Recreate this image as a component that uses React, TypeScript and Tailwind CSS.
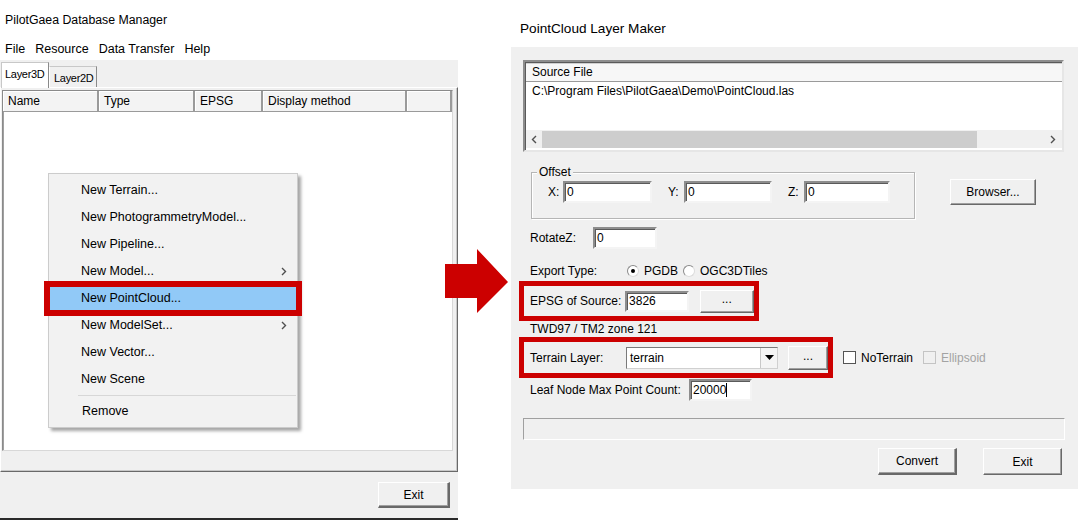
import React from 'react';

const inputCls =
  'bg-white border-2 border-t-[#8d8d8d] border-l-[#8d8d8d] border-r-[#f4f4f4] border-b-[#f4f4f4] shadow-[inset_1px_1px_0_#5a5a5a] flex items-center pl-[2px]';
const btnCls =
  'bg-[#f0f0f0] border border-t-white border-l-white border-r-[#696969] border-b-[#696969] shadow-[inset_-1px_-1px_0_#a0a0a0] flex items-center justify-center';

const Chevron: React.FC<{ dir: 'left' | 'right' }> = ({ dir }) => (
  <svg width="6" height="9" viewBox="0 0 6 9">
    <path d={dir === 'right' ? 'M1 1 L4.5 4.5 L1 8' : 'M5 1 L1.5 4.5 L5 8'} fill="none" stroke="#505050" strokeWidth="1.4" />
  </svg>
);

const menuItems = [
  { label: 'New Terrain...' },
  { label: 'New PhotogrammetryModel...' },
  { label: 'New Pipeline...' },
  { label: 'New Model...', sub: true },
  { label: 'New PointCloud...', active: true },
  { label: 'New ModelSet...', sub: true },
  { label: 'New Vector...' },
  { label: 'New Scene' },
];

const columns = [
  { name: 'Name', w: 'w-[96px]' },
  { name: 'Type', w: 'w-[96px]' },
  { name: 'EPSG', w: 'w-[68px]' },
  { name: 'Display method', w: 'w-[144px]' },
  { name: '', w: 'flex-1' },
];

function DatabaseManager() {
  return (
    <div className="w-[458px] flex flex-col">
      <div className="h-[39px] pt-[11px] pl-[5px] text-[12.3px]">PilotGaea Database Manager</div>
      <div className="h-[21px] flex items-center pl-[5px] gap-[10px] text-[12.5px]">
        <span>File</span>
        <span>Resource</span>
        <span>Data Transfer</span>
        <span>Help</span>
      </div>
      <div className="flex-1 bg-[#f0f0f0] flex flex-col border-b-2 border-[#2a2a2a]">
        {/* tabs */}
        <div className="h-[27px] flex items-end pl-[1px] text-[11px] tracking-[-0.3px]">
          <div className="h-[26px] w-[48px] bg-white border border-b-0 border-t-[#c8c8c8] border-l-[#c8c8c8] border-r-[#8a8a8a] pl-[3px] pt-[3px] -mb-px relative z-10">
            Layer3D
          </div>
          <div className="h-[21px] w-[48px] bg-[#f0f0f0] border border-b-0 border-t-[#c8c8c8] border-l-white border-r-[#8a8a8a] pl-[4px] pt-[3px]">
            Layer2D
          </div>
        </div>
        {/* tab panel */}
        <div className="h-[385px] bg-[#f0f0f0] border border-t-white border-l-white border-r-[#696969] border-b-[#696969] shadow-[inset_-1px_-1px_0_#c8c8c8]">
          <div className="mt-[2px] ml-[1px] w-[451px] h-[361px] bg-white border border-[#8a8a8a] border-r-[#d8d8d8] border-b-[#d8d8d8] shadow-[inset_1px_1px_0_#a0a0a0] flex flex-col">
            <div className="h-[21px] flex bg-[#f3f3f3] border-b border-[#9a9a9a] text-[12px]">
              {columns.map((c, i) => (
                <div
                  key={i}
                  className={`${c.w} h-full flex items-center pl-[5px] border-r-2 border-[#9a9a9a] shadow-[inset_1px_1px_0_#fff]`}
                >
                  {c.name}
                </div>
              ))}
            </div>
          </div>
        </div>
        <div className="flex justify-end pr-[8px] pt-[10px]">
          <div className={`${btnCls} w-[72px] h-[26px] border-[#7a7a7a] border-r-2 border-b-2 text-[12px]`}>Exit</div>
        </div>
      </div>
    </div>
  );
}

function Radio({ checked, label }: { checked?: boolean; label: string }) {
  return (
    <div className="flex items-center gap-[5px]">
      <div className="w-[12px] h-[12px] rounded-full bg-white border border-t-[#8a8a8a] border-l-[#8a8a8a] border-r-[#dcdcdc] border-b-[#dcdcdc] flex items-center justify-center">
        {checked && <div className="w-[4px] h-[4px] rounded-full bg-black" />}
      </div>
      <span>{label}</span>
    </div>
  );
}

function PointCloudMaker() {
  return (
    <div className="ml-[53px] flex-1 flex flex-col text-[12px]">
      <div className="h-[47px] pt-[21px] pl-[9px] text-[13.6px] leading-[16px]">PointCloud Layer Maker</div>
      <div className="h-[442px] bg-[#f0f0f0] flex flex-col">
        {/* source list */}
        <div className="mt-[13px] ml-[12px] w-[541px] h-[92px] bg-white border-2 border-t-[#8d8d8d] border-l-[#8d8d8d] border-r-[#e6e6e6] border-b-[#e6e6e6] shadow-[inset_1px_1px_0_#5a5a5a] flex flex-col">
          <div className="h-[19px] ml-px mt-px bg-[#f7f7f7] border-b border-[#9a9a9a] flex items-center pl-[6px] shadow-[inset_0_1px_0_#d0d0d0]">
            Source File
          </div>
          <div className="h-[18px] flex items-center pl-[7px]">C:\Program Files\PilotGaea\Demo\PointCloud.las</div>
          <div className="flex-1" />
          <div className="h-[18px] ml-px mb-[2px] bg-[#f0f0f0] flex items-center">
            <div className="w-[16px] flex justify-center">
              <Chevron dir="left" />
            </div>
            <div className="w-[435px] h-[17px] bg-[#cdcdcd]" />
            <div className="flex-1" />
            <div className="w-[18px] flex justify-center">
              <Chevron dir="right" />
            </div>
          </div>
        </div>

        {/* offset */}
        <div className="mt-[20px] flex items-start">
          <div className="ml-[20px] w-[384px] h-[47px] relative border border-[#b5b5b5] shadow-[1px_1px_0_#fff,inset_1px_1px_0_#fff]">
            <span className="absolute -top-[8px] left-[5px] px-[2px] bg-[#f0f0f0] leading-[14px]">Offset</span>
            <div className="flex items-center pt-[8px] pl-[16px]">
              <span className="w-[15px]">X:</span>
              <div className={`${inputCls} w-[89px] h-[22px]`}>0</div>
              <span className="w-[16px]" />
              <span className="w-[16px]">Y:</span>
              <div className={`${inputCls} w-[88px] h-[22px]`}>0</div>
              <span className="w-[16px]" />
              <span className="w-[16px]">Z:</span>
              <div className={`${inputCls} w-[86px] h-[22px]`}>0</div>
            </div>
          </div>
          <div className={`${btnCls} ml-[35px] mt-[7px] w-[86px] h-[26px]`}>Browser...</div>
        </div>

        {/* rotate */}
        <div className="mt-[8px] h-[22px] flex items-center pl-[19px]">
          <span className="w-[63px]">RotateZ:</span>
          <div className={`${inputCls} w-[64px] h-[22px]`}>0</div>
        </div>

        {/* export type */}
        <div className="mt-[11px] h-[21px] flex items-center pl-[19px]">
          <span className="w-[97px]">Export Type:</span>
          <Radio checked label="PGDB" />
          <div className="w-[5px]" />
          <Radio label="OGC3DTiles" />
        </div>

        {/* epsg */}
        <div className="ml-[8px] w-[240px] h-[40px] border-[5px] border-[#cc0000] flex items-center pl-[6px]">
          <span className="w-[96px]">EPSG of Source:</span>
          <div className={`${inputCls} w-[64px] h-[21px]`}>3826</div>
          <div className={`${btnCls} ml-[11px] w-[55px] h-[23px] pb-[4px]`}>...</div>
        </div>

        <div className="h-[16px] pl-[19px] flex items-center">TWD97 / TM2 zone 121</div>

        {/* terrain */}
        <div className="flex items-center">
          <div className="ml-[8px] w-[314px] h-[41px] border-[5px] border-[#cc0000] flex items-center pl-[6px]">
            <span className="w-[96px]">Terrain Layer:</span>
            <div className="w-[152px] h-[22px] bg-white border border-t-[#7a7a7a] border-l-[#7a7a7a] border-r-[#d0d0d0] border-b-[#d0d0d0] flex items-center">
              <span className="flex-1 pl-[3px]">terrain</span>
              <div className="w-[17px] h-full bg-[#f4f4f4] border-l border-[#c8c8c8] flex items-center justify-center">
                <svg width="9" height="5" viewBox="0 0 9 5">
                  <polygon points="0,0 9,0 4.5,5" fill="#000" />
                </svg>
              </div>
            </div>
            <div className={`${btnCls} ml-[10px] w-[40px] h-[24px] pb-[4px]`}>...</div>
          </div>
          <div className="ml-[10px] w-[13px] h-[13px] bg-white border border-[#555]" />
          <span className="ml-[5px]">NoTerrain</span>
          <div className="ml-[10px] w-[13px] h-[13px] bg-[#f0f0f0] border border-[#c4c4c4]" />
          <span className="ml-[5px] text-[#a3a3a3]">Ellipsoid</span>
        </div>

        {/* leaf */}
        <div className="mt-px h-[22px] flex items-center pl-[19px]">
          <span className="w-[159px]">Leaf Node Max Point Count:</span>
          <div className={`${inputCls} w-[63px] h-[22px]`}>
            20000
            <span className="w-px h-[14px] bg-black" />
          </div>
        </div>

        {/* status */}
        <div className="mt-[17px] ml-[12px] w-[542px] h-[22px] border border-t-[#a0a0a0] border-l-[#a0a0a0] border-r-white border-b-white bg-[#f0f0f0]" />

        {/* buttons */}
        <div className="mt-[8px] flex justify-end pr-[16px] gap-[26px]">
          <div className={`${btnCls} w-[79px] h-[27px] border-[#555] border-r-2 border-b-2`}>Convert</div>
          <div className={`${btnCls} w-[79px] h-[27px]`}>Exit</div>
        </div>
      </div>
    </div>
  );
}

export default function App() {
  return (
    <div className="relative w-[1078px] h-[520px] bg-white flex text-black font-['Liberation_Sans',Arial,sans-serif] overflow-hidden">
      <DatabaseManager />
      <PointCloudMaker />

      {/* context menu */}
      <div className="absolute left-[48px] top-[173px] w-[250px] h-[255px] bg-[#f2f2f2] border border-[#cccccc] shadow-[3px_3px_3px_rgba(0,0,0,0.35)] pt-[3px] px-[1px] text-[12.5px]">
        {menuItems.map((m) => (
          <div key={m.label} className="h-[27px] flex items-center">
            <div
              className={`w-full h-[23px] flex items-center pl-[31px] pr-[9px] ${
                m.active ? 'bg-[#91c9f7] outline-[6px] outline-solid outline-[#cc0000]' : ''
              }`}
            >
              <span className="flex-1">{m.label}</span>
              {m.sub && <Chevron dir="right" />}
            </div>
          </div>
        ))}
        <div className="ml-[28px] h-[1px] bg-[#d7d7d7] my-[2px]" />
        <div className="h-[27px] flex items-center pl-[32px]">Remove</div>
      </div>

      {/* red arrow */}
      <svg className="absolute left-[445px] top-[249px]" width="64" height="65" viewBox="0 0 64 65">
        <polygon points="0,15 32,15 32,0 63,33 32,64 32,49 0,49" fill="#cc0000" />
      </svg>
    </div>
  );
}
